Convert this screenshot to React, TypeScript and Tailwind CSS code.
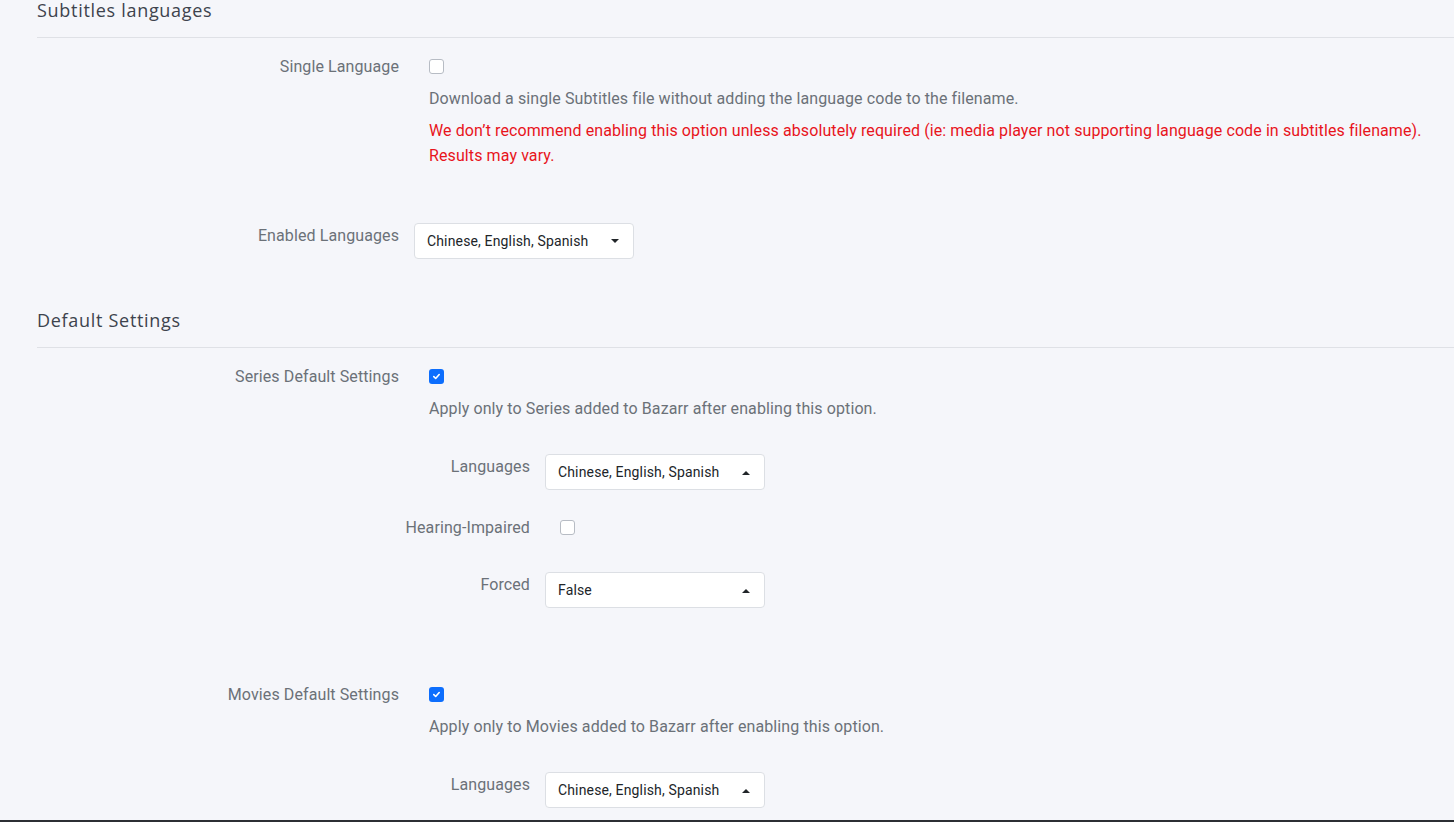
import React from "react";

const Check = ({ checked }: { checked?: boolean }) =>
  checked ? (
    <div className="w-[15px] h-[15px] rounded-[3px] bg-[#0d6efd] flex items-center justify-center">
      <svg width="9" height="9" viewBox="0 0 10 10">
        <path d="M2 5.2 L4.1 7.2 L8 2.8" fill="none" stroke="#fff" strokeWidth="1.8" strokeLinecap="round" strokeLinejoin="round" />
      </svg>
    </div>
  ) : (
    <div className="w-[15px] h-[15px] rounded-[3px] bg-white border border-[#b7bcc4]" />
  );

const Select = ({ value, up }: { value: string; up?: boolean }) => (
  <div className="w-[220px] h-[36px] bg-white border border-[#dcdfe4] rounded-[4px] flex items-center pl-[12px] pr-[14px] text-[14px] tracking-[0.15px] text-[#212529]">
    <span className="flex-1 pt-[1px]">{value}</span>
    <svg width="8" height="5" viewBox="0 0 8 5">
      {up ? <path d="M0 5 L4 1 L8 5 Z" fill="#212529" /> : <path d="M0 0 L8 0 L4 4 Z" fill="#212529" />}
    </svg>
  </div>
);

const Heading = ({ children, className = "" }: { children: React.ReactNode; className?: string }) => (
  <div className={"border-b border-[#dfe1e6] pb-[17px] mr-[-20px] " + className}>
    <div className="text-[18px] leading-[20px] text-[#3d434d] tracking-[0.7px]" style={{ fontFamily: '"Open Sans", sans-serif' }}>
      {children}
    </div>
  </div>
);

const label = "w-[377px] pr-[15px] pt-[1px] text-right text-[16px] leading-[24px] tracking-[0.1px] text-[#6b7178] shrink-0";
const sub = "w-[131px] pr-[15px] pt-[1px] flex justify-end text-[16px] leading-[24px] tracking-[0.1px] text-[#6b7178] shrink-0 whitespace-nowrap";
const desc = "pl-[15px] mt-[12px] pt-[1px] text-[16px] leading-[24px] tracking-[0.1px] text-[#6b7178]";

export default function App() {
  return (
    <div
      className="w-[1454px] h-[822px] overflow-hidden bg-[#f5f6fa] border-b-2 border-[#2c2f34]"
      style={{ fontFamily: 'Roboto, "Liberation Sans", sans-serif' }}
    >
      <div className="pl-[37px]">
        <Heading>Subtitles languages</Heading>

        {/* Single Language */}
        <div className="flex mt-[16px]">
          <div className={label}>Single Language</div>
          <div className="flex-1">
            <div className="pl-[15px] mt-[5px]"><Check /></div>
            <div className={desc}>
              Download a single Subtitles file without adding the language code to the filename.
            </div>
            <div className="pl-[15px] mt-[7px] w-[1015px] text-[16px] leading-[25px] tracking-[0.1px] text-[#e8141c]">
              We don’t recommend enabling this option unless absolutely required (ie: media player not supporting language code in subtitles filename). Results may vary.
            </div>
          </div>
        </div>

        {/* Enabled Languages */}
        <div className="flex mt-[55px]">
          <div className={label}>Enabled Languages</div>
          <Select value="Chinese, English, Spanish" />
        </div>

        <Heading className="mt-[51px]">Default Settings</Heading>

        {/* Series */}
        <div className="flex mt-[16px]">
          <div className={label}>Series Default Settings</div>
          <div className="flex-1">
            <div className="pl-[15px] mt-[5px]"><Check checked /></div>
            <div className={desc}>
              Apply only to Series added to Bazarr after enabling this option.
            </div>
            <div className="flex mt-[33px]">
              <div className={sub}>Languages</div>
              <Select value="Chinese, English, Spanish" up />
            </div>
            <div className="flex mt-[25px]">
              <div className={sub}>Hearing-Impaired</div>
              <div className="pl-[15px] mt-[5px]"><Check /></div>
            </div>
            <div className="flex mt-[32px]">
              <div className={sub}>Forced</div>
              <Select value="False" up />
            </div>
          </div>
        </div>

        {/* Movies */}
        <div className="flex mt-[74px]">
          <div className={label}>Movies Default Settings</div>
          <div className="flex-1">
            <div className="pl-[15px] mt-[5px]"><Check checked /></div>
            <div className={desc}>
              Apply only to Movies added to Bazarr after enabling this option.
            </div>
            <div className="flex mt-[33px]">
              <div className={sub}>Languages</div>
              <Select value="Chinese, English, Spanish" up />
            </div>
          </div>
        </div>
      </div>
    </div>
  );
}
